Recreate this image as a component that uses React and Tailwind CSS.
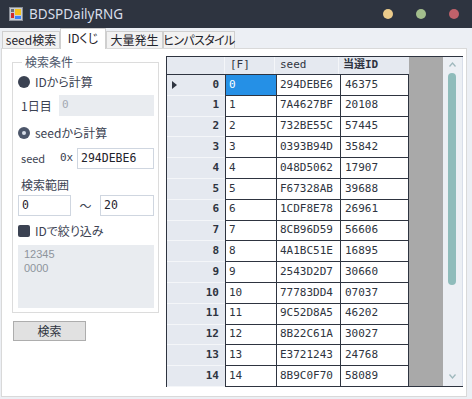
import React from 'react';

const rows = [
  [0, '294DEBE6', '46375'],
  [1, '7A4627BF', '20108'],
  [2, '732BE55C', '57445'],
  [3, '0393B94D', '35842'],
  [4, '048D5062', '17907'],
  [5, 'F67328AB', '39688'],
  [6, '1CDF8E78', '26961'],
  [7, '8CB96D59', '56606'],
  [8, '4A1BC51E', '16895'],
  [9, '2543D2D7', '30660'],
  [10, '77783DD4', '07037'],
  [11, '9C52D8A5', '46202'],
  [12, '8B22C61A', '30027'],
  [13, 'E3721243', '24768'],
  [14, '8B9C0F70', '58089'],
];

const tabs = [
  { label: 'seed検索', w: 'w-[58px]' },
  { label: 'IDくじ', w: 'w-[46px]', active: true },
  { label: '大量発生', w: 'w-[57px]' },
  { label: 'ヒンパスタイル', w: 'w-[72px] tracking-[-0.6px]' },
];

const AppIcon = () => (
  <svg width="14" height="14" viewBox="0 0 14 14">
    <rect x="0.5" y="0.5" width="13" height="13" fill="#c9ccd1" stroke="#8a8f98" />
    <rect x="2" y="2" width="3" height="3" fill="#6b7078" />
    <rect x="2" y="6" width="3" height="5" fill="#d22b2b" />
    <rect x="6" y="2" width="6" height="6" fill="#f5c21b" />
    <rect x="6" y="9" width="6" height="3" fill="#3b82f6" />
  </svg>
);

const Chevron = ({ up }) => (
  <svg width="7" height="5" viewBox="0 0 7 5">
    <polyline
      points={up ? '0.5,4.5 3.5,1 6.5,4.5' : '0.5,0.5 3.5,4 6.5,0.5'}
      fill="none"
      stroke="#9fb8bd"
      strokeWidth="1.3"
    />
  </svg>
);

const App = () => {
  return (
    <div className="flex h-[399px] w-[472px] flex-col bg-[#eceff4] font-['Noto_Sans_CJK_JP',sans-serif] text-[#2e3440] [font-feature-settings:'palt']">
      {/* タイトルバー */}
      <div className="flex h-[28px] shrink-0 items-center bg-[#2e3440] pl-[9px] pr-[13px]">
        <AppIcon />
        <span className="ml-[6px] font-['Noto_Sans',sans-serif] text-[13.5px] text-[#d8dee9]">BDSPDailyRNG</span>
        <div className="ml-auto flex gap-[23px]">
          <span className="h-[10px] w-[10px] rounded-full bg-[#ebcb8b]" />
          <span className="h-[10px] w-[10px] rounded-full bg-[#a3be8c]" />
          <span className="h-[10px] w-[10px] rounded-full bg-[#bf616a]" />
        </div>
      </div>

      {/* タブ */}
      <div className="flex h-[20px] shrink-0 items-end pl-[2px]">
        {tabs.map((t) =>
          t.active ? (
            <div
              key={t.label}
              className={`relative z-10 -mb-[1px] flex h-[21px] shrink-0 items-center justify-center whitespace-nowrap border border-b-0 border-[#cfcfcf] bg-white pb-[2px] text-[12px] text-[#1f232b] ${t.w}`}
            >
              {t.label}
            </div>
          ) : (
            <div
              key={t.label}
              className={`flex h-[17px] shrink-0 items-center justify-center whitespace-nowrap border border-b-0 border-[#cfcfcf] bg-[#f2f2f2] text-[12px] text-[#1f232b] ${t.w}`}
            >
              {t.label}
            </div>
          )
        )}
      </div>

      {/* パネル */}
      <div className="ml-[1px] mr-[5px] mb-[2px] flex flex-1 border border-[#d9d9d9] bg-white">
        {/* 左側 */}
        <div className="flex w-[157px] flex-col">
          <fieldset className="ml-[10px] mt-[6px] w-[147px] border border-[#dcdcdc] pb-[4px] pl-[5px] pr-[4px] text-[12px] text-[#3b4252]">
            <legend className="ml-[4px] px-[3px] text-[12px] leading-[14px] text-[#4c566a]">検索条件</legend>

            <div className="mt-[5px] flex h-[15px] items-center">
              <span className="h-[12px] w-[12px] rounded-full bg-[#3b4252]" />
              <span className="ml-[5px]">IDから計算</span>
            </div>

            <div className="mt-[6px] flex h-[21px] items-center">
              <span className="ml-[3px] w-[38px]">1日目</span>
              <div className="flex h-[21px] flex-1 items-center bg-[#e9ecf0] pl-[3px] font-['DejaVu_Sans_Mono',monospace] text-[11px] text-[#a3a9b3]">
                0
              </div>
            </div>

            <div className="mt-[9px] flex h-[15px] items-center">
              <span className="flex h-[12px] w-[12px] items-center justify-center rounded-full bg-[#4c566a]">
                <span className="h-[4px] w-[4px] rounded-full bg-[#d8dee9]" />
              </span>
              <span className="ml-[5px]">seedから計算</span>
            </div>

            <div className="mt-[8px] flex h-[21px] items-center">
              <span className="ml-[3px] w-[39px] text-[11px]">seed</span>
              <span className="w-[17px] font-['DejaVu_Sans_Mono',monospace] text-[11px]">0x</span>
              <div className="flex h-[21px] flex-1 items-center border border-[#cfd6e0] pl-[3px] font-['DejaVu_Sans_Mono',monospace] text-[11.5px] text-[#1f232b]">
                294DEBE6
              </div>
            </div>

            <div className="mt-[8px] flex h-[15px] items-center pl-[3px]">検索範囲</div>

            <div className="mt-[3px] flex h-[21px] items-center">
              <div className="flex h-[21px] w-[53px] items-center border border-[#cfd6e0] pl-[3px] font-['DejaVu_Sans_Mono',monospace] text-[11.5px] text-[#1f232b]">
                0
              </div>
              <span className="w-[29px] text-center">〜</span>
              <div className="flex h-[21px] flex-1 items-center border border-[#cfd6e0] pl-[3px] font-['DejaVu_Sans_Mono',monospace] text-[11.5px] text-[#1f232b]">
                20
              </div>
            </div>

            <div className="mt-[7px] flex h-[15px] items-center">
              <span className="h-[12px] w-[12px] rounded-[2px] bg-[#3b4252]" />
              <span className="ml-[5px]">IDで絞り込み</span>
            </div>

            <div className="mt-[7px] h-[63px] bg-[#e9ecf0] pl-[6px] pt-[2px] font-['Liberation_Sans',sans-serif] text-[11px] leading-[14px] text-[#8e949c]">
              <div>12345</div>
              <div>0000</div>
            </div>
          </fieldset>

          <button className="ml-[11px] mt-[8px] h-[20px] w-[73px] border border-[#adadad] bg-[#e1e1e1] text-[12px] leading-none text-[#2e3440]">
            検索
          </button>
        </div>

        {/* 結果テーブル */}
        <div className="ml-[7px] mt-[7px] flex h-[331px] w-[297px] border-y border-l border-[#2e3440] font-['DejaVu_Sans_Mono','Noto_Sans_CJK_JP',monospace] text-[11px] text-[#2e3440]">
          <div className="flex w-[242px] flex-col">
            <div className="flex h-[18px] border-b border-[#2e3440] bg-[#e5e9f0]">
              <div className="w-[58px] border-r border-[#f4f6f9]" />
              <div className="flex w-[50px] items-center border-r border-[#f4f6f9] pl-[5px]">[F]</div>
              <div className="flex w-[64px] items-center border-r border-[#f4f6f9] pl-[5px]">seed</div>
              <div className="flex w-[69px] items-center pl-[4px] font-bold">当選ID</div>
            </div>
            {rows.map(([n, seed, id], i) => (
              <div
                key={n}
                className={`flex ${i === rows.length - 1 ? 'h-[19.8px]' : 'h-[20.8px] border-b border-[#2e3440]'}`}
              >
                <div className="-mb-[1px] flex w-[58px] items-center justify-end border-b border-[#f4f6f9] bg-[#e5e9f0] pr-[6px] font-bold">
                  {i === 0 && (
                    <svg className="mr-auto ml-[5px]" width="5" height="8" viewBox="0 0 5 8">
                      <polygon points="0,0 5,4 0,8" fill="#2e3440" />
                    </svg>
                  )}
                  {n}
                </div>
                <div
                  className={`flex w-[51px] items-center border-l border-[#2e3440] pl-[3px] ${
                    i === 0 ? 'bg-[#2590e6] text-white' : ''
                  }`}
                >
                  {n}
                </div>
                <div className="flex w-[64px] items-center border-l border-[#2e3440] pl-[3px]">{seed}</div>
                <div className="flex w-[69px] items-center border-x border-[#2e3440] pl-[4px]">{id}</div>
              </div>
            ))}
          </div>
          <div className="w-[34px] bg-[#a9a9a9]" />
          <div className="flex w-[20px] flex-col items-center border-r border-[#d8dee9] bg-[#eceff4] pr-[1px]">
            <div className="flex h-[14px] items-center">
              <Chevron up />
            </div>
            <div className="mt-[2px] h-[212px] w-[8px] rounded-full bg-[#8fbcbb]" />
            <div className="flex-1" />
            <div className="mb-[6px] flex h-[8px] items-center">
              <Chevron />
            </div>
          </div>
        </div>
      </div>
    </div>
  );
};

export default App;
